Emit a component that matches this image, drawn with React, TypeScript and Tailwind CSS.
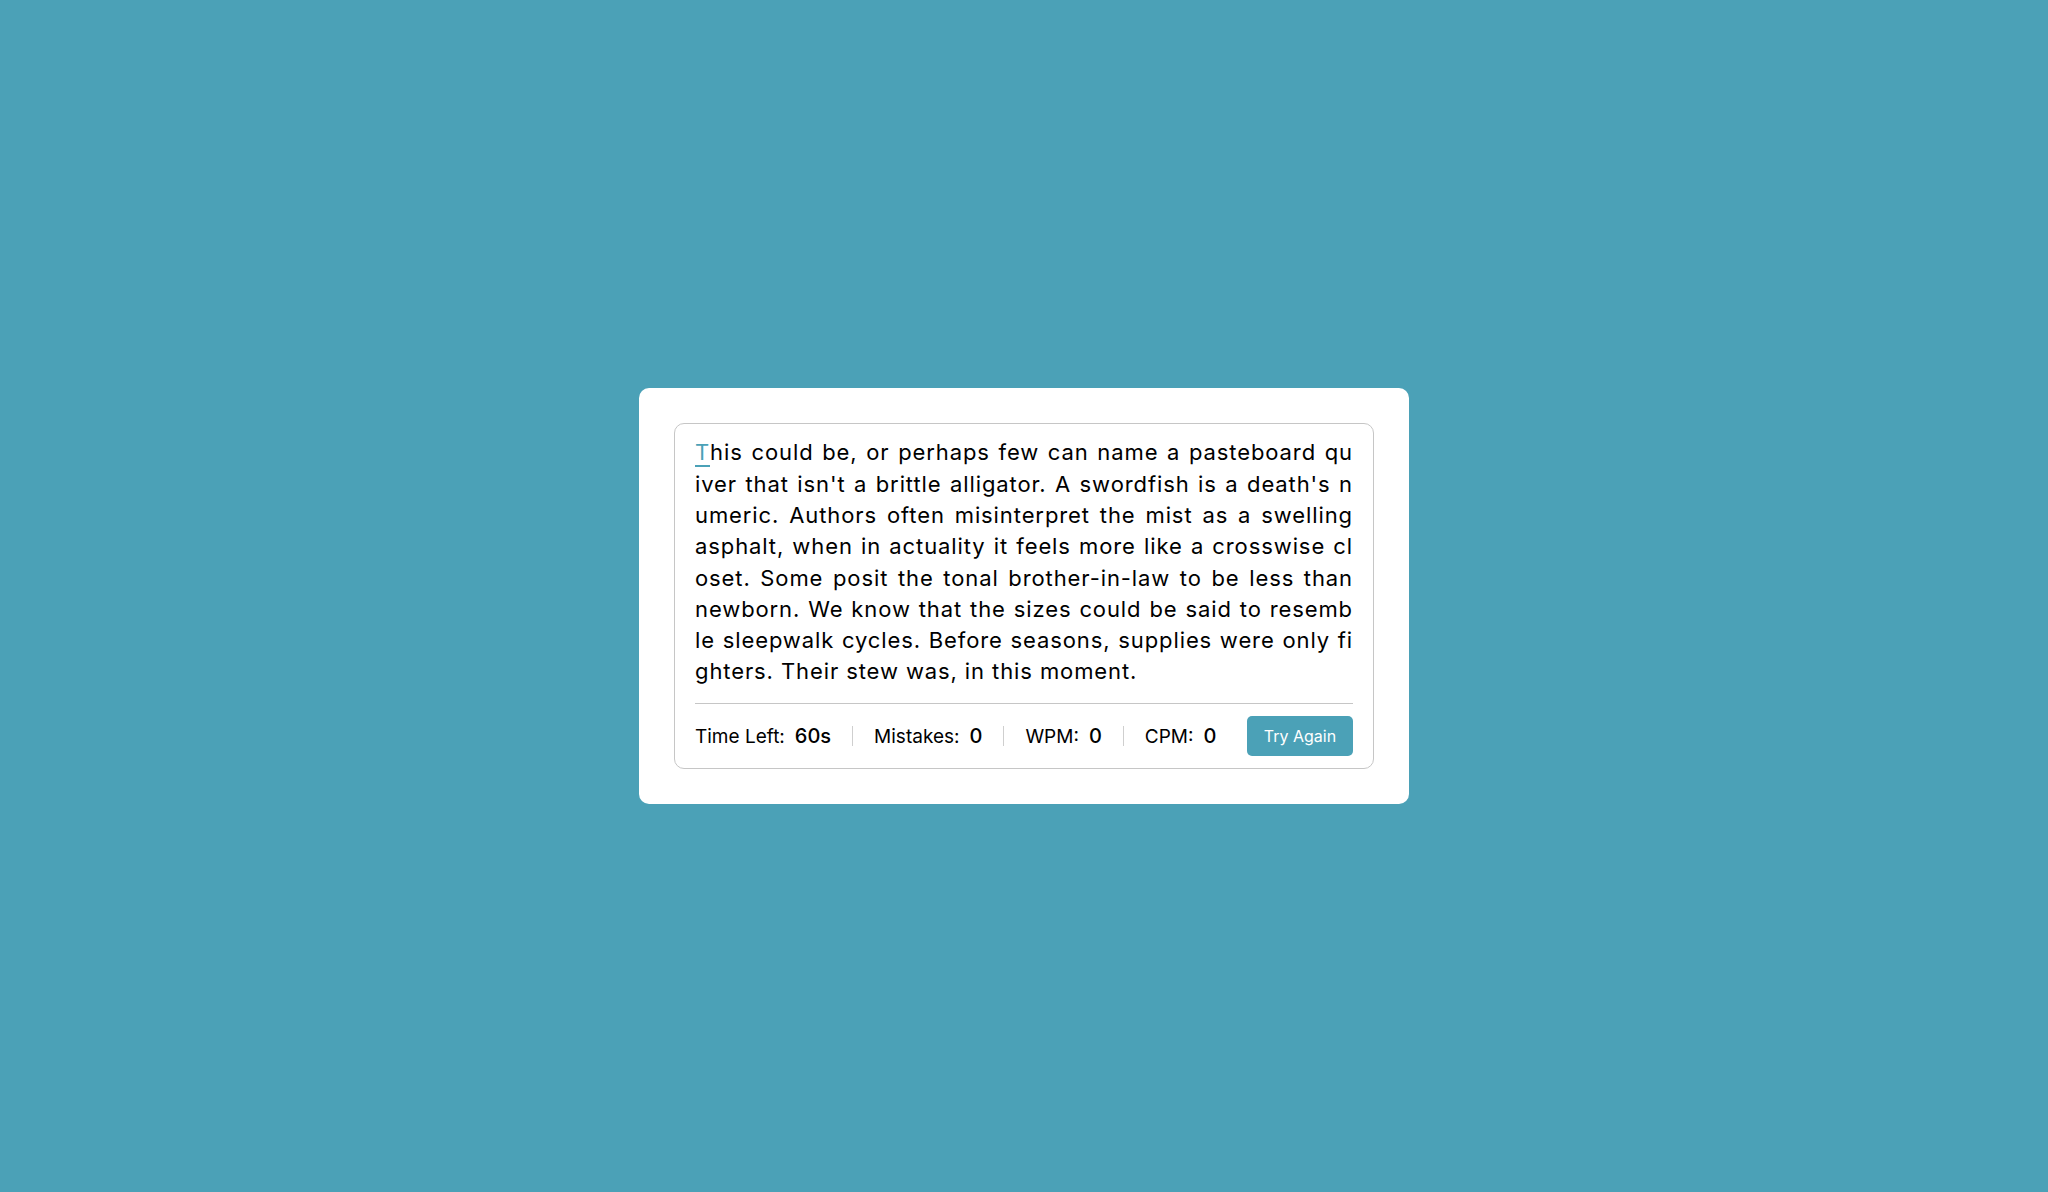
const lines = [
  "his could be, or perhaps few can name a pasteboard qu",
  "iver that isn't a brittle alligator. A swordfish is a death's n",
  "umeric. Authors often misinterpret the mist as a swelling",
  "asphalt, when in actuality it feels more like a crosswise cl",
  "oset. Some posit the tonal brother-in-law to be less than",
  "newborn. We know that the sizes could be said to resemb",
  "le sleepwalk cycles. Before seasons, supplies were only fi",
  "ghters. Their stew was, in this moment.",
];

const stats = [
  { label: 'Time Left:', value: '60s' },
  { label: 'Mistakes:', value: '0' },
  { label: 'WPM:', value: '0' },
  { label: 'CPM:', value: '0' },
];

const App = () => {
  return (
    <div className="min-h-screen w-full flex items-center justify-center bg-[#4ba1b7] font-['Inter','Noto_Sans',sans-serif]">
      <div className="w-[770px] bg-white rounded-[10px] p-[35px]">
        <div className="border border-[#c6c6c6] rounded-[10px] px-5 pt-[13px] pb-3">
          <div className="text-[22px] leading-[31.3px] tracking-[0.9px] text-black mb-[15px]">
            {lines.map((line, i) => (
              <div
                key={i}
                className={`whitespace-nowrap ${i < lines.length - 1 ? 'text-justify [text-align-last:justify]' : ''}`}
              >
                {i === 0 && (
                  <span className="text-[#4ba1b7] border-b-2 border-[#4ba1b7]">T</span>
                )}
                {line}
              </div>
            ))}
          </div>
          <div className="h-px bg-[#c6c6c6]" />
          <div className="flex items-center justify-between pt-3">
            <ul className="flex items-center">
              {stats.map((s, i) => (
                <li
                  key={s.label}
                  className={`flex items-baseline h-5 leading-5 gap-2.5 ${i === 0 ? 'pr-[21px]' : 'px-[21px] border-l border-[#cfcfcf]'} ${i === stats.length - 1 ? 'pr-0' : ''}`}
                >
                  <span className="text-[19px] text-black">{s.label}</span>
                  <span className="text-[20px] font-medium text-black">{s.value}</span>
                </li>
              ))}
            </ul>
            <button className="h-10 w-[106px] rounded-[5px] bg-[#4ba1b7] text-white text-[16px]">
              Try Again
            </button>
          </div>
        </div>
      </div>
    </div>
  );
};

export default App;
